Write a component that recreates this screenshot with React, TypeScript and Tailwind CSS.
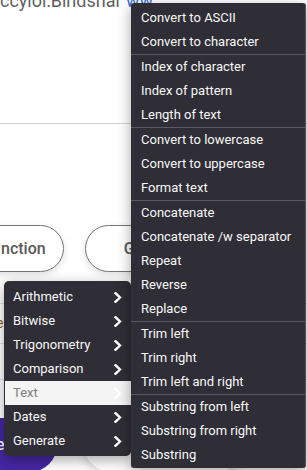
import React from "react";

const groups: string[][] = [
  ["Convert to ASCII", "Convert to character"],
  ["Index of character", "Index of pattern", "Length of text"],
  ["Convert to lowercase", "Convert to uppercase", "Format text"],
  ["Concatenate", "Concatenate /w separator", "Repeat", "Reverse", "Replace"],
  ["Trim left", "Trim right", "Trim left and right"],
  ["Substring from left", "Substring from right", "Substring"],
];

const categories = [
  "Arithmetic",
  "Bitwise",
  "Trigonometry",
  "Comparison",
  "Text",
  "Dates",
  "Generate",
];

function Chevron() {
  return (
    <svg width="8" height="11" viewBox="0 0 8 11" fill="none">
      <polyline
        points="1.5,1.2 6,5.5 1.5,9.8"
        stroke="#ffffff"
        strokeWidth="2.4"
        strokeLinecap="square"
        strokeLinejoin="miter"
      />
    </svg>
  );
}

export default function App() {
  return (
    <div
      className="relative w-[307px] h-[470px] overflow-hidden bg-white"
      style={{ fontFamily: "Roboto, 'Liberation Sans', sans-serif" }}
    >
      {/* background page */}
      <div className="flex flex-col">
        <div className="h-[123px] overflow-hidden">
          <div className="mt-[-8px] text-[18px] leading-[18px] text-[#5f5f5f] whitespace-nowrap">
            ccylol:Bindshar <span className="text-[#3a6fd0]">ww</span>
          </div>
        </div>
        <div className="h-px bg-[#d2d2d6]" />
        <div className="mt-[101px] flex h-[47px] gap-[21px]">
          <div className="-ml-[30px] pl-[30px] pr-[17px] h-[47px] rounded-full border border-[#75757a] bg-white flex items-center text-[16px] font-medium text-[#5a5a5a] shadow-[0_3px_7px_rgba(0,0,0,0.12)]">
            nction
          </div>
          <div className="pl-[38px] pr-[40px] h-[47px] rounded-full border border-[#75757a] bg-white flex items-center text-[16px] font-medium text-[#5a5a5a] shadow-[0_3px_7px_rgba(0,0,0,0.12)] whitespace-nowrap">
            Generate text
          </div>
        </div>
        <div className="mt-[31px] h-px bg-[#e2e2e6]" />
        <div className="h-[39px] flex items-center">
          <span className="-ml-[4px] text-[14px] text-[#9a5b2c]">e</span>
        </div>
        <div className="h-px bg-[#e2e2e6]" />
        <div className="h-[35px]" />
        <div className="h-px bg-[#e2e2e6]" />
        <div className="mt-[38px] flex gap-[27px]">
          <div className="-ml-[40px] pl-[36px] pr-[52px] h-[54px] rounded-full bg-[#4527a3] flex items-center text-[16px] font-medium text-white">
            e
          </div>
          <div className="w-[160px] h-[54px] rounded-full bg-white shadow-[0_2px_10px_rgba(0,0,0,0.18)]" />
        </div>
      </div>

      {/* category menu */}
      <div className="absolute left-[4px] top-[281px] w-[127px] pt-[4px] pb-[3px] bg-[#2f2d35] rounded-[5px] shadow-[0_4px_14px_rgba(0,0,0,0.35)]">
        {categories.map((c) => {
          const active = c === "Text";
          return (
            <div
              key={c}
              className={
                "h-[24px] flex items-center justify-between pl-[9px] pr-[9px] text-[13px] " +
                (active ? "bg-[#f4f4f4] text-[#7d7d7d] ml-px" : "text-[#f8f8f8]")
              }
            >
              <span className={active ? "-ml-px" : ""}>{c}</span>
              <Chevron />
            </div>
          );
        })}
      </div>

      {/* text submenu */}
      <div className="absolute left-[131px] top-[3px] w-[175px] pt-[3px] pb-px bg-[#2f2d35] rounded-[3px] border-r border-[#55535b] shadow-[0_4px_14px_rgba(0,0,0,0.35)]">
        {groups.map((g, gi) => (
          <div key={gi} className={gi > 0 ? "border-t border-[#5a5860]" : ""}>
            {g.map((item) => (
              <div
                key={item}
                className="h-[24px] flex items-center pl-[10px] text-[13px] text-[#f8f8f8] whitespace-nowrap"
              >
                {item}
              </div>
            ))}
          </div>
        ))}
      </div>
    </div>
  );
}
